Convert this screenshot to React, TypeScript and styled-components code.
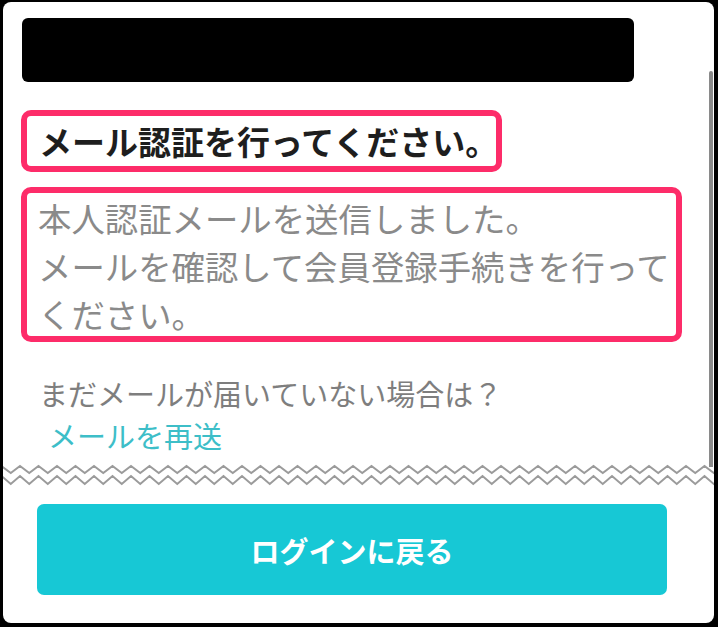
import React from "react";
import styled, { createGlobalStyle } from "styled-components";

const Global = createGlobalStyle`
  html, body { margin: 0; padding: 0; background: #000; }
  body { font-family: "Noto Sans CJK JP", "Noto Sans", sans-serif; }
  * { box-sizing: border-box; }
`;

const Page = styled.div`
  width: 718px;
  height: 627px;
  padding: 2px 4px 4px 3px;
  background: #000;
`;

const Card = styled.div`
  position: relative;
  width: 711px;
  height: 621px;
  background: #fff;
  border-radius: 8px;
  overflow: hidden;
  display: flex;
  flex-direction: column;
`;

const Upper = styled.div`
  display: flex;
  flex-direction: column;
  align-items: flex-start;
  padding: 16px 0 0 18px;
`;

const Redacted = styled.div`
  width: 612px;
  height: 64px;
  margin-left: 1px;
  background: #000;
  border-radius: 6px;
`;

const PinkBox = styled.div<{ $w: number; $h: number; $mt: number }>`
  width: ${(p) => p.$w}px;
  height: ${(p) => p.$h}px;
  margin-top: ${(p) => p.$mt}px;
  border: 6px solid #fd2c69;
  border-radius: 10px;
`;

const Title = styled.h1`
  margin: 0;
  height: 100%;
  display: flex;
  align-items: center;
  padding-left: 12px;
  font-size: 33px;
  font-weight: 700;
  color: #1e1e1e;
  letter-spacing: 0;
  white-space: nowrap;
`;

const Message = styled.div`
  padding: 1px 0 0 11px;
  font-size: 33.4px;
  line-height: 48px;
  font-weight: 400;
  color: #8a8a8a;
  white-space: nowrap;
`;

const Line = styled.div``;

const Question = styled.p`
  margin: 31px 0 0 18px;
  font-size: 29px;
  line-height: 40px;
  color: #7e7e7e;
  white-space: nowrap;
`;

const Resend = styled.a`
  display: block;
  margin: 2px 0 0 27px;
  font-size: 29px;
  line-height: 40px;
  color: #3dbec8;
  text-decoration: none;
  white-space: nowrap;
`;

const ZigzagSvg = styled.svg`
  display: block;
  margin-top: 5px;
  flex: none;
`;

const Footer = styled.div`
  padding: 14px 0 0 34px;
`;

const Button = styled.button`
  width: 630px;
  height: 91px;
  border: none;
  border-radius: 7px;
  background: #17c8d5;
  color: #fff;
  font-family: "Noto Sans CJK JP", "Noto Sans", sans-serif;
  font-size: 29px;
  font-weight: 700;
  padding: 0;
  cursor: pointer;
`;

const ScrollThumb = styled.div`
  position: absolute;
  left: 706px;
  top: 69px;
  width: 4px;
  height: 396px;
  background: #8a8a8a;
  border-radius: 2px 2px 0 0;
`;

function zig(width: number, period: number, phase: number, top: number, bottom: number) {
  const pts: string[] = [];
  const half = period / 2;
  let x = phase - period * 2;
  let up = true;
  while (x < width + period) {
    pts.push(`${x.toFixed(2)},${up ? top : bottom}`);
    x += half;
    up = !up;
  }
  return pts.join(" ");
}

const Zigzag: React.FC = () => (
  <ZigzagSvg width={711} height={30} viewBox="0 0 711 30">
    <polyline points={zig(711, 18.5, 17, 6, 13)} fill="none" stroke="#9b9b9b" strokeWidth={2} />
    <polyline points={zig(711, 18.5, 17, 16, 24)} fill="none" stroke="#9b9b9b" strokeWidth={2} />
  </ZigzagSvg>
);

export default function App() {
  return (
    <>
      <Global />
      <Page>
        <Card>
          <Upper>
            <Redacted />
            <PinkBox $w={481} $h={62} $mt={28}>
              <Title>メール認証を行ってください。</Title>
            </PinkBox>
            <PinkBox $w={661} $h={155} $mt={15}>
              <Message>
                <Line>本人認証メールを送信しました。</Line>
                <Line>メールを確認して会員登録手続きを行って</Line>
                <Line>ください。</Line>
              </Message>
            </PinkBox>
            <Question>まだメールが届いていない場合は？</Question>
            <Resend href="#">メールを再送</Resend>
          </Upper>
          <Zigzag />
          <Footer>
            <Button>ログインに戻る</Button>
          </Footer>
          <ScrollThumb />
        </Card>
      </Page>
    </>
  );
}
